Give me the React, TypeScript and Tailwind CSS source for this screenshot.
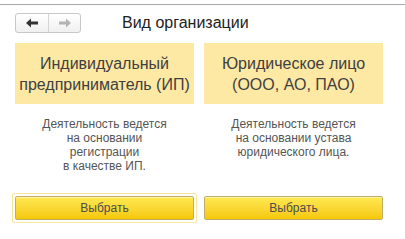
const options = [
  {
    title: ["Индивидуальный", "предприниматель (ИП)"],
    text: ["Деятельность ведется", "на основании", "регистрации", "в качестве ИП."],
    focused: true,
  },
  {
    title: ["Юридическое лицо", "(ООО, АО, ПАО)"],
    text: ["Деятельность ведется", "на основании устава", "юридического лица."],
    focused: false,
  },
];

const NavArrow = ({ dir, color }: { dir: "left" | "right"; color: string }) => (
  <svg width="12" height="10" viewBox="0 0 12 10" className={dir === "right" ? "rotate-180" : ""}>
    <path d="M0 5 L5 0.5 L5 3.6 L12 3.6 L12 6.4 L5 6.4 L5 9.5 Z" fill={color} />
  </svg>
);

export default function App() {
  return (
    <div className="h-[239px] w-[405px] bg-white pt-1 font-['Liberation_Sans',Arial,sans-serif] text-[#333]">
      <div className="h-px w-full bg-[#a8a8a8]" />
      <div className="mt-[8px] flex items-center pl-[15px]">
        <div className="flex h-5 w-[66px] overflow-hidden rounded-[3px] border border-[#c8c8c8] bg-gradient-to-b from-white to-[#f0f0f0]">
          <div className="flex w-[33px] items-center justify-center border-r border-[#d4d4d4]">
            <NavArrow dir="left" color="#333" />
          </div>
          <div className="flex flex-1 items-center justify-center">
            <NavArrow dir="right" color="#b4b4b4" />
          </div>
        </div>
        <h1 className="ml-[41px] text-[16px] leading-5 text-[#222]">Вид организации</h1>
      </div>
      <div className="mt-[10px] flex gap-[10px] pl-[15px]">
        {options.map((o, i) => (
          <div key={i} className="flex w-[179px] flex-col">
            <div className="flex h-[61px] flex-col items-center justify-center bg-[#fde8a4] text-[16px] leading-[21px] text-[#404040]">
              {o.title.map((t) => (
                <div key={t} className="whitespace-nowrap">{t}</div>
              ))}
            </div>
            <div className="mt-[13px] h-[79px] text-center text-[12px] leading-[14px] text-[#555]">
              {o.text.map((t) => (
                <div key={t}>{t}</div>
              ))}
            </div>
            <div className={o.focused ? "-m-[3px] rounded-[2px] border border-[#f5e7a0] p-[2px]" : ""}>
              <button className="flex h-[24px] w-full items-center justify-center rounded-[2px] border border-[#bfae6a] bg-gradient-to-b from-[#ffe94f] to-[#f5c800] text-[12px] text-[#4d4d4d] shadow-[inset_0_1px_0_rgba(255,255,255,0.5)]">
                Выбрать
              </button>
            </div>
          </div>
        ))}
      </div>
    </div>
  );
}
